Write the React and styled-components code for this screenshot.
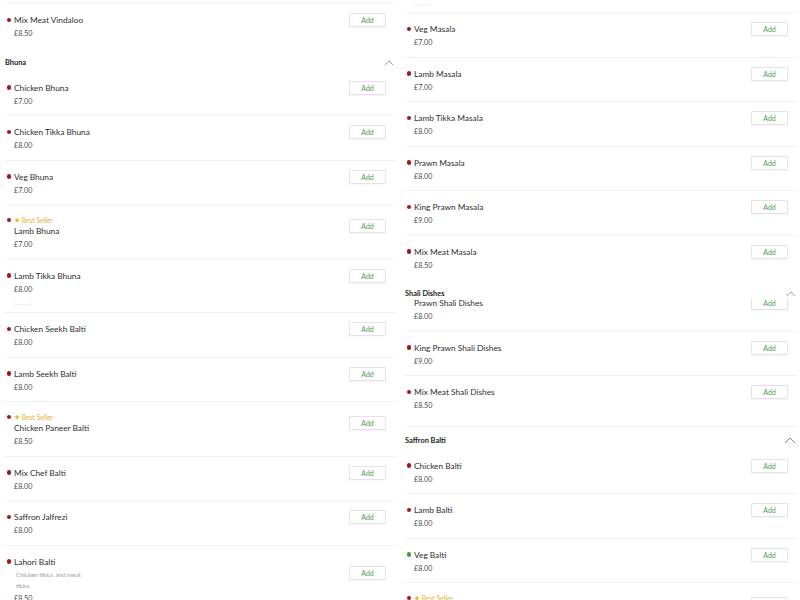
import React from "react";
import styled, { createGlobalStyle } from "styled-components";

const GlobalStyle = createGlobalStyle`
  html, body { margin: 0; padding: 0; background: #ffffff; overflow: hidden; }
  body { font-family: "Lato", "Liberation Sans", sans-serif; color: #333; }
  * { box-sizing: border-box; }
`;

const Page = styled.div`
  display: grid;
  grid-template-columns: 390px 392px;
  column-gap: 10px;
  padding-left: 5px;
  height: 600px;
  overflow: hidden;
`;

const Column = styled.div`
  display: flex;
  flex-direction: column;
  margin-top: -40.5px;
`;

const Section = styled.section`
  display: flex;
  flex-direction: column;
`;

const SectionHeader = styled.div`
  display: flex;
  align-items: center;
  justify-content: space-between;
  padding: 9px 1px 4px 0;
  margin-top: ${(p) => (p.$divider ? "5px" : "0")};
  border-top: ${(p) => (p.$divider ? "1px solid #efefef" : "none")};
  background: #fff;
  ${(p) =>
    p.$overlay &&
    `
    position: relative;
    z-index: 1;
    padding-bottom: 0;
    margin-bottom: -12px;
  `}
`;

const SectionTitle = styled.h3`
  margin: 0;
  font-size: 7.4px;
  line-height: 10px;
  font-weight: 700;
  color: #222;
`;

const Row = styled.div`
  display: flex;
  flex-direction: column;
  padding: 10px 9px 7.5px 0;
  border-bottom: 1px solid ${(p) => (p.$last ? "transparent" : "#efefef")};
`;

const Main = styled.div`
  display: flex;
  align-items: center;
  justify-content: space-between;
`;

const Info = styled.div`
  display: flex;
  flex-direction: column;
`;

const Line = styled.div`
  display: flex;
  align-items: center;
  height: ${(p) => p.$h}px;
`;

const Gutter = styled.span`
  display: flex;
  align-items: center;
  width: 9px;
  flex: none;
  padding-left: 1.5px;
`;

const Dot = styled.span`
  width: 4.5px;
  height: 4.5px;
  border-radius: 50%;
  background: ${(p) => (p.$veg ? "#43a047" : "#a8121c")};
`;

const Badge = styled.span`
  display: flex;
  align-items: center;
  gap: 1.5px;
  font-size: 6.8px;
  color: #e2b13c;
`;

const Name = styled.span`
  font-size: 8.3px;
  color: #2e2e2e;
  white-space: nowrap;
`;

const Desc = styled.p`
  margin: 1px 0 0 11px;
  max-width: 78px;
  font-size: 6.2px;
  line-height: 11px;
  color: #9a9a9a;
`;

const Price = styled.div`
  margin-top: 2px;
  padding-left: 9px;
  font-size: 7.2px;
  line-height: 12px;
  color: #4a4a4a;
`;

const Extra = styled.div`
  margin: 4px 0 0 9px;
  width: 17px;
  height: 5px;
  border: 1px solid #f1f1f1;
  border-top: none;
`;

const AddButton = styled.button`
  width: 37px;
  height: 14px;
  margin: -1px 0;
  padding: 0;
  border: 1px solid #e3e3e3;
  border-radius: 1px;
  background: #fff;
  box-shadow: 0 1px 1px rgba(0, 0, 0, 0.04);
  font-family: inherit;
  font-size: 7px;
  color: #4f9d4f;
  flex: none;
`;

const Star = () => (
  <svg width="6" height="6" viewBox="0 0 24 24">
    <path
      d="M12 2l3 6.6 7.2.8-5.4 4.9 1.5 7.1L12 17.8 5.7 21.4l1.5-7.1L1.8 9.4 9 8.6z"
      fill="#eeb31c"
    />
  </svg>
);

const Chevron = ({ w = 10 }) => (
  <svg width={w} height={w / 2 + 1} viewBox="0 0 12 7">
    <polyline points="1,6 6,1 11,6" fill="none" stroke="#8a8a8a" strokeWidth="1" />
  </svg>
);

function Item({ name, price, best, veg, desc, last, extra, noDot }) {
  const dot = noDot ? null : <Dot $veg={veg} />;
  return (
    <Row $last={last}>
      <Main>
        <Info>
          {best && (
            <Line $h={10}>
              <Gutter>{dot}</Gutter>
              <Badge>
                <Star />
                Best Seller
              </Badge>
            </Line>
          )}
          <Line $h={12}>
            <Gutter>{best ? null : dot}</Gutter>
            <Name>{name}</Name>
          </Line>
          {desc && <Desc>{desc}</Desc>}
        </Info>
        <AddButton>Add</AddButton>
      </Main>
      <Price>{price}</Price>
      {extra && <Extra />}
    </Row>
  );
}

const leftSections = [
  {
    items: [
      { name: "Mix Meat Jalfrezi", price: "£8.50" },
      { name: "Mix Meat Vindaloo", price: "£8.50", last: true },
    ],
  },
  {
    title: "Bhuna",
    items: [
      { name: "Chicken Bhuna", price: "£7.00" },
      { name: "Chicken Tikka Bhuna", price: "£8.00" },
      { name: "Veg Bhuna", price: "£7.00" },
      { name: "Lamb Bhuna", price: "£7.00", best: true },
      { name: "Lamb Tikka Bhuna", price: "£8.00", extra: true },
      { name: "Chicken Seekh Balti", price: "£8.00" },
      { name: "Lamb Seekh Balti", price: "£8.00" },
      { name: "Chicken Paneer Balti", price: "£8.50", best: true },
      { name: "Mix Chef Balti", price: "£8.00" },
      { name: "Saffron Jalfrezi", price: "£8.00" },
      { name: "Lahori Balti", price: "£8.50", desc: "Chicken tikka, and meat tikka" },
    ],
  },
];

const rightSections = [
  {
    items: [
      { name: "Chicken Tikka Masala", price: "£8.00", extra: true },
      { name: "Veg Masala", price: "£7.00" },
      { name: "Lamb Masala", price: "£7.00" },
      { name: "Lamb Tikka Masala", price: "£8.00" },
      { name: "Prawn Masala", price: "£8.00" },
      { name: "King Prawn Masala", price: "£9.00" },
      { name: "Mix Meat Masala", price: "£8.50", last: true },
    ],
  },
  {
    title: "Shali Dishes",
    overlay: true,
    items: [
      { name: "Prawn Shali Dishes", price: "£8.00", noDot: true },
      { name: "King Prawn Shali Dishes", price: "£9.00" },
      { name: "Mix Meat Shali Dishes", price: "£8.50", last: true },
    ],
  },
  {
    title: "Saffron Balti",
    divider: true,
    big: true,
    items: [
      { name: "Chicken Balti", price: "£8.00" },
      { name: "Lamb Balti", price: "£8.00" },
      { name: "Veg Balti", price: "£8.00", veg: true },
      { name: "Lamb Paneer Balti", price: "£8.50", best: true },
    ],
  },
];

function Menu({ sections }) {
  return (
    <Column>
      {sections.map((s, i) => (
        <Section key={i}>
          {s.title && (
            <SectionHeader $divider={s.divider} $overlay={s.overlay}>
              <SectionTitle>{s.title}</SectionTitle>
              <Chevron w={s.big ? 12 : 10} />
            </SectionHeader>
          )}
          {s.items.map((it, j) => (
            <Item key={j} {...it} />
          ))}
        </Section>
      ))}
    </Column>
  );
}

export default function App() {
  return (
    <>
      <GlobalStyle />
      <Page>
        <Menu sections={leftSections} />
        <Menu sections={rightSections} />
      </Page>
    </>
  );
}
